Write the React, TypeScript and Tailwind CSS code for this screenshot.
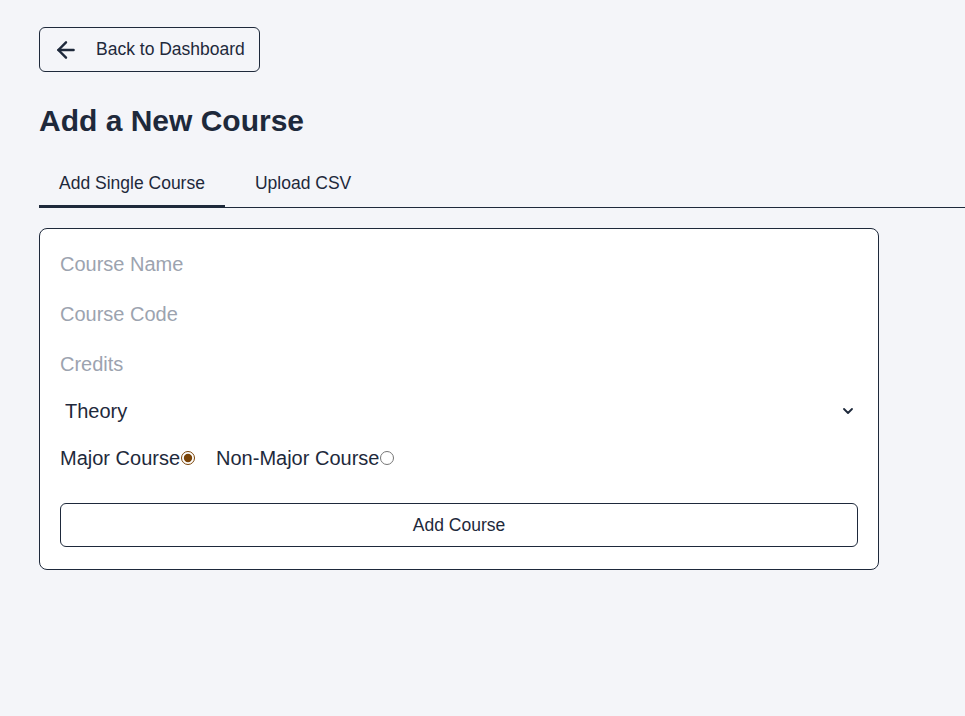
import { useState } from "react";
import { ArrowLeft, ChevronDown } from "lucide-react";

export default function App() {
  const [tab, setTab] = useState<"single" | "csv">("single");
  const [major, setMajor] = useState(true);

  return (
    <div
      className="min-h-screen bg-[#f4f5f9] pl-[39px] pt-[27px] text-[#1e293b]"
      style={{ fontFamily: '"Liberation Sans", Arial, sans-serif' }}
    >
      <button className="flex h-[45px] w-[221px] items-center gap-[17px] rounded-md border border-[#1e293b] bg-transparent pl-[13px] text-[17.5px]">
        <ArrowLeft size={26} strokeWidth={2.25} />
        <span>Back to Dashboard</span>
      </button>

      <h1 className="mt-[31px] text-3xl font-bold leading-9">Add a New Course</h1>

      <div className="mt-[20px] flex gap-2.5 border-b border-[#1e293b]">
        <button
          onClick={() => setTab("single")}
          className={`-mb-px px-5 pb-[10px] pt-[12px] text-[17.5px] leading-6 ${
            tab === "single" ? "border-b-[3px] border-[#1e293b]" : "border-b-[3px] border-transparent"
          }`}
        >
          Add Single Course
        </button>
        <button
          onClick={() => setTab("csv")}
          className={`-mb-px px-5 pb-[10px] pt-[12px] text-[17.5px] leading-6 ${
            tab === "csv" ? "border-b-[3px] border-[#1e293b]" : "border-b-[3px] border-transparent"
          }`}
        >
          Upload CSV
        </button>
      </div>

      <form
        className="mt-[20px] flex w-[840px] flex-col rounded-lg border border-[#1e293b] bg-white px-5 pb-[22px] pt-[21px]"
        onSubmit={(e) => e.preventDefault()}
      >
        <input
          placeholder="Course Name"
          className="h-[28px] text-xl text-[#1e293b] outline-none placeholder:text-[#9ca3af]"
        />
        <input
          placeholder="Course Code"
          className="mt-[22px] h-[28px] text-xl text-[#1e293b] outline-none placeholder:text-[#9ca3af]"
        />
        <input
          placeholder="Credits"
          className="mt-[22px] h-[28px] text-xl text-[#1e293b] outline-none placeholder:text-[#9ca3af]"
        />

        <div className="relative mt-[18px] h-[30px]">
          <select className="h-full w-full appearance-none bg-transparent pl-[5px] text-xl text-[#1e293b] outline-none">
            <option>Theory</option>
            <option>Lab</option>
          </select>
          <ChevronDown
            size={16}
            strokeWidth={2.75}
            className="pointer-events-none absolute right-[2px] top-[7px]"
          />
        </div>

        <div className="mt-[22px] flex h-[20px] items-center text-xl">
          <label className="flex items-center">
            Major Course
            <input
              type="radio"
              name="type"
              checked={major}
              onChange={() => setMajor(true)}
              className="ml-[1px] h-[14px] w-[14px] accent-[#7a4306]"
            />
          </label>
          <label className="ml-[21px] flex items-center">
            Non-Major Course
            <input
              type="radio"
              name="type"
              checked={!major}
              onChange={() => setMajor(false)}
              className="ml-[1px] h-[14px] w-[14px] accent-[#7a4306]"
            />
          </label>
        </div>

        <button
          type="submit"
          className="mt-[35px] h-[44px] w-full rounded-md border border-[#1e293b] bg-white text-[17.5px]"
        >
          Add Course
        </button>
      </form>
    </div>
  );
}
